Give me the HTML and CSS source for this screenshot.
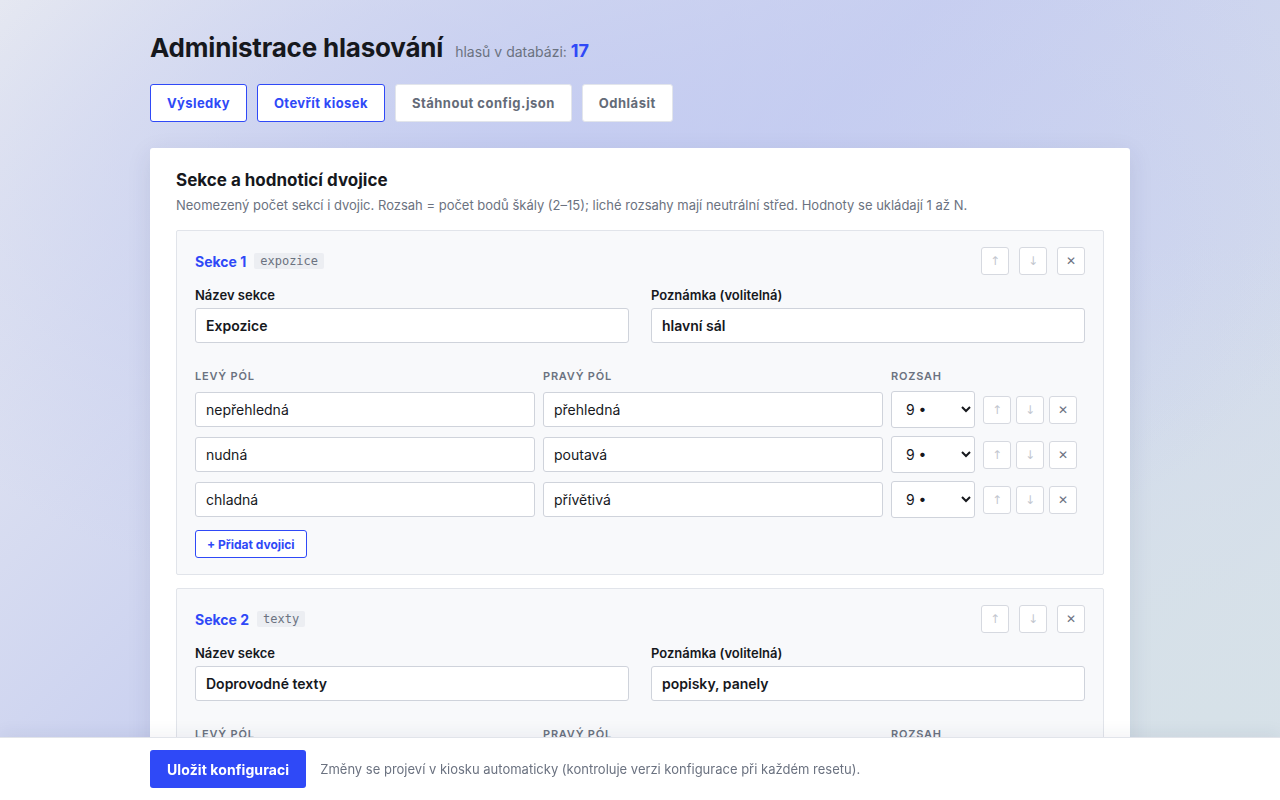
FILE: index.html
```html
<!DOCTYPE html>
<html lang="cs">
<head>
    <meta charset="UTF-8">
    <meta name="viewport" content="width=device-width, initial-scale=1.0">
    <title>Administrace hlasování</title>
    <link rel="stylesheet" href="styles.css">
</head>
<body>
    <div class="container">
        <div class="page-head">
            <h1>Administrace hlasování</h1>
            <span class="count">hlasů v databázi: <strong>17</strong></span>
        </div>

        <div class="toolbar">
            <button class="btn btn-primary-outline">Výsledky</button>
            <button class="btn btn-primary-outline">Otevřít kiosek</button>
            <button class="btn">Stáhnout config.json</button>
            <button class="btn">Odhlásit</button>
        </div>

        <div class="card">
            <h2>Sekce a hodnoticí dvojice</h2>
            <p class="hint">Neomezený počet sekcí i dvojic. Rozsah = počet bodů škály (2–15); liché rozsahy mají neutrální střed. Hodnoty se ukládají 1 až N.</p>

            <div class="section">
                <div class="section-head">
                    <div class="section-title">Sekce 1 <code>expozice</code></div>
                    <div class="mini-actions">
                        <button class="mini" disabled>↑</button>
                        <button class="mini" disabled>↓</button>
                        <button class="mini del">✕</button>
                    </div>
                </div>
                <div class="fields">
                    <label>Název sekce<input class="strong" type="text" value="Expozice"></label>
                    <label>Poznámka (volitelná)<input class="strong" type="text" value="hlavní sál"></label>
                </div>
                <div class="pairs">
                    <div class="col-label">Levý pól</div>
                    <div class="col-label">Pravý pól</div>
                    <div class="col-label">Rozsah</div>
                    <div></div>

                    <input type="text" value="nepřehledná">
                    <input type="text" value="přehledná">
                    <select><option>9 •</option></select>
                    <div class="row-actions"><button class="mini" disabled>↑</button><button class="mini" disabled>↓</button><button class="mini del">✕</button></div>

                    <input type="text" value="nudná">
                    <input type="text" value="poutavá">
                    <select><option>9 •</option></select>
                    <div class="row-actions"><button class="mini" disabled>↑</button><button class="mini" disabled>↓</button><button class="mini del">✕</button></div>

                    <input type="text" value="chladná">
                    <input type="text" value="přívětivá">
                    <select><option>9 •</option></select>
                    <div class="row-actions"><button class="mini" disabled>↑</button><button class="mini" disabled>↓</button><button class="mini del">✕</button></div>
                </div>
                <button class="btn-small">+ Přidat dvojici</button>
            </div>

            <div class="section">
                <div class="section-head">
                    <div class="section-title">Sekce 2 <code>texty</code></div>
                    <div class="mini-actions">
                        <button class="mini" disabled>↑</button>
                        <button class="mini" disabled>↓</button>
                        <button class="mini del">✕</button>
                    </div>
                </div>
                <div class="fields">
                    <label>Název sekce<input class="strong" type="text" value="Doprovodné texty"></label>
                    <label>Poznámka (volitelná)<input class="strong" type="text" value="popisky, panely"></label>
                </div>
                <div class="pairs">
                    <div class="col-label">Levý pól</div>
                    <div class="col-label">Pravý pól</div>
                    <div class="col-label">Rozsah</div>
                    <div></div>

                    <input type="text" value="nesrozumitelné">
                    <input type="text" value="srozumitelné">
                    <select><option>9 •</option></select>
                    <div class="row-actions"><button class="mini" disabled>↑</button><button class="mini" disabled>↓</button><button class="mini del">✕</button></div>
                </div>
                <button class="btn-small">+ Přidat dvojici</button>
            </div>
        </div>
    </div>

    <div class="savebar">
        <div class="savebar-inner">
            <button class="btn-save">Uložit konfiguraci</button>
            <span>Změny se projeví v kiosku automaticky (kontroluje verzi konfigurace při každém resetu).</span>
        </div>
    </div>
</body>
</html>
```

FILE: styles.css
```css
html {
    min-height: 100%;
    background:
        radial-gradient(ellipse 60% 55% at 45% 25%, #c3cbf1 0%, rgba(195, 203, 241, 0) 100%),
        radial-gradient(ellipse 50% 60% at 95% 90%, #d6e1e8 0%, rgba(214, 225, 232, 0) 100%),
        linear-gradient(135deg, #eaecf1 0%, #c9d0f0 45%, #dae2ea 100%);
    background-attachment: fixed;
}

body {
    margin: 0;
    font-family: Inter, "Noto Sans", sans-serif;
    color: #16181d;
    padding-bottom: 90px;
}

.container {
    width: 980px;
    margin: 0 auto;
    padding-top: 32px;
}

.page-head {
    display: flex;
    align-items: baseline;
    gap: 12px;
}

h1 {
    margin: 0;
    font-size: 26px;
    font-weight: 700;
    letter-spacing: -0.2px;
    color: #16181d;
}

.count {
    font-size: 14px;
    color: #6b7280;
}

.count strong {
    font-size: 18px;
    color: #2f49f7;
    font-weight: 700;
}

.toolbar {
    display: flex;
    gap: 10px;
    margin-top: 21px;
}

.btn {
    height: 38px;
    padding: 0 16px;
    background: #fff;
    border: 1px solid #e2e5eb;
    border-radius: 3px;
    font-family: Inter, sans-serif;
    font-size: 13px;
    font-weight: 700;
    letter-spacing: 0.5px;
    color: #646b78;
}

.btn-primary-outline {
    border-color: #2f49f7;
    color: #2f49f7;
    letter-spacing: 0.4px;
}

.card {
    margin-top: 26px;
    background: #fff;
    border-radius: 3px;
    padding: 22px 26px 26px;
    box-shadow: 0 6px 24px rgba(40, 50, 90, 0.10);
}

h2 {
    margin: 0;
    font-size: 17px;
    font-weight: 700;
}

.hint {
    margin: 7px 0 17px;
    font-size: 13px;
    color: #6b7280;
}

.section {
    background: #f8f9fb;
    border: 1px solid #e1e4ea;
    border-radius: 2px;
    padding: 16px 18px 16px;
    margin-bottom: 13px;
}

.section-head {
    display: flex;
    justify-content: space-between;
    align-items: center;
}

.section-title {
    font-size: 14px;
    font-weight: 700;
    color: #2f49f7;
    display: flex;
    align-items: center;
    gap: 8px;
}

.section-title code {
    font-family: "DejaVu Sans Mono", "Liberation Mono", monospace;
    font-size: 12px;
    font-weight: 400;
    color: #6b7280;
    background: #eceef2;
    padding: 1px 6px;
    border-radius: 2px;
}

.mini-actions {
    display: flex;
    gap: 10px;
}

.row-actions {
    display: flex;
    gap: 5px;
}

.mini {
    width: 28px;
    height: 28px;
    padding: 0;
    background: #fff;
    border: 1px solid #d6d9e0;
    border-radius: 3px;
    font-family: "DejaVu Sans", sans-serif;
    font-size: 12px;
    color: #6b7280;
}

.mini:disabled {
    color: #c3c7cf;
}

.fields {
    display: grid;
    grid-template-columns: 1fr 1fr;
    gap: 22px;
    margin-top: 12px;
}

.fields label {
    display: flex;
    flex-direction: column;
    gap: 5px;
    font-size: 13px;
    font-weight: 600;
    color: #16181d;
}

input, select {
    box-sizing: border-box;
    height: 35px;
    border: 1px solid #cfd3db;
    border-radius: 3px;
    background: #fff;
    padding: 0 10px;
    font-family: Inter, sans-serif;
    font-size: 14px;
    color: #16181d;
}

input.strong {
    font-weight: 600;
}

select {
    height: 37px;
    padding: 0 8px 0 10px;
}

.pairs {
    display: grid;
    grid-template-columns: 340px 340px 84px 1fr;
    column-gap: 8px;
    row-gap: 8px;
    align-items: center;
    margin-top: 26px;
}

.pairs .col-label {
    font-size: 11px;
    font-weight: 600;
    letter-spacing: 0.8px;
    text-transform: uppercase;
    color: #6b7280;
}

.btn-small {
    margin-top: 12px;
    height: 28px;
    padding: 0 11px;
    background: #fff;
    border: 1px solid #2f49f7;
    border-radius: 3px;
    font-family: Inter, sans-serif;
    font-size: 12px;
    font-weight: 700;
    color: #2f49f7;
}

.savebar {
    position: fixed;
    left: 0;
    right: 0;
    bottom: 0;
    height: 62px;
    background: #fff;
    border-top: 1px solid #e1e4ea;
    box-shadow: 0 -4px 16px rgba(40, 50, 90, 0.06);
}

.savebar-inner {
    width: 980px;
    margin: 0 auto;
    height: 100%;
    display: flex;
    align-items: center;
    gap: 14px;
}

.btn-save {
    height: 38px;
    padding: 0 17px;
    background: #2f49f7;
    border: none;
    border-radius: 3px;
    font-family: Inter, sans-serif;
    font-size: 14px;
    font-weight: 700;
    letter-spacing: 0.1px;
    color: #fff;
}

.savebar span {
    font-size: 13px;
    color: #6b7280;
}
```
